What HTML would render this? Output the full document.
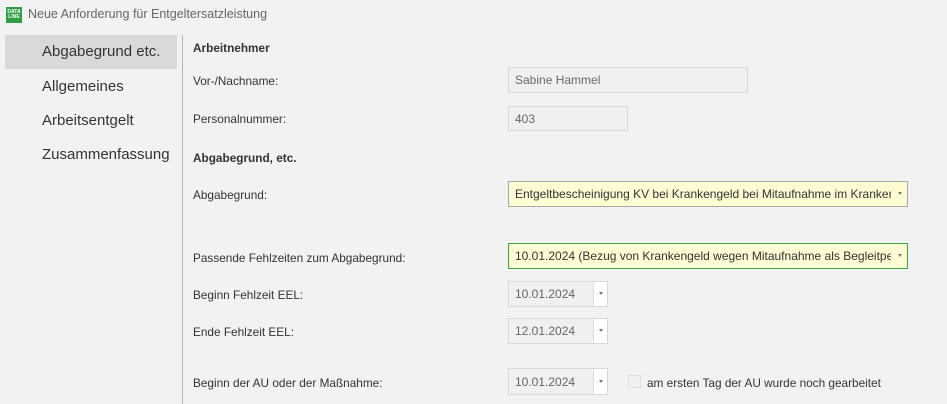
<!DOCTYPE html>
<html><head><meta charset="utf-8"><style>
*{box-sizing:border-box;margin:0;padding:0}
body{width:947px;height:404px;background:#f2f2f2;font-family:"Liberation Sans",sans-serif;color:#333;position:relative;overflow:hidden}
.a{position:absolute;white-space:nowrap}
.lbl{font-size:11.8px;color:#333}
.side{font-size:15px;color:#333;left:42px}
.box{position:absolute;border:1px solid #d8d8d8;background:#f0f0f0;font-size:12px;color:#666;padding-left:6px;display:flex;align-items:center;overflow:hidden;white-space:nowrap}
.dd{position:absolute;background:#fffbd3;border:1px solid #a9a9a9;font-size:12px;color:#333;padding-left:6px;display:flex;align-items:center;white-space:nowrap}
.dd .t{display:block;overflow:hidden;width:376px}
.arr{position:absolute;right:4px;top:50%;margin-top:-2px;width:0;height:0;border-left:2.5px solid transparent;border-right:2.5px solid transparent;border-top:3px solid #777}
.dd .arr{right:5px}
.btn{position:absolute;right:0;top:0;bottom:0;width:14px;background:#fff;border-left:1px solid #ddd}
.btn .arr{right:4px}
</style></head><body>
<div class="a" style="left:6px;top:7px;width:16px;height:16px;background:#2e9e44;color:#fff;font-size:5px;line-height:5px;font-weight:bold;text-align:center;padding-top:3px">DATA<br>LINE</div>
<div class="a" style="left:28px;top:7px;font-size:12.5px;color:#666">Neue Anforderung für Entgeltersatzleistung</div>
<div class="a" style="left:5px;top:35px;width:172px;height:34px;background:#d9d9d9"></div>
<div class="a side" style="top:43px">Abgabegrund etc.</div>
<div class="a side" style="top:78px">Allgemeines</div>
<div class="a side" style="top:112px">Arbeitsentgelt</div>
<div class="a side" style="top:146px">Zusammenfassung</div>
<div class="a" style="left:182px;top:35px;width:1px;height:369px;background:#b4b4b4"></div>
<div class="a lbl" style="left:193px;top:41px;font-weight:bold">Arbeitnehmer</div>
<div class="a lbl" style="left:193px;top:74px">Vor-/Nachname:</div>
<div class="box" style="left:508px;top:67px;width:240px;height:26px">Sabine Hammel</div>
<div class="a lbl" style="left:193px;top:112px">Personalnummer:</div>
<div class="box" style="left:508px;top:106px;width:120px;height:25px">403</div>
<div class="a lbl" style="left:193px;top:151px;font-weight:bold">Abgabegrund, etc.</div>
<div class="a lbl" style="left:193px;top:188px">Abgabegrund:</div>
<div class="dd" style="left:508px;top:181px;width:400px;height:26px"><span class="t">Entgeltbescheinigung KV bei Krankengeld bei Mitaufnahme im Krankenhaus</span><span class="arr"></span></div>
<div class="a lbl" style="left:193px;top:251px">Passende Fehlzeiten zum Abgabegrund:</div>
<div class="dd" style="left:508px;top:243px;width:400px;height:26px;border-color:#3aa83a"><span class="t">10.01.2024 (Bezug von Krankengeld wegen Mitaufnahme als Begleitperson)</span><span class="arr"></span></div>
<div class="a lbl" style="left:193px;top:288px">Beginn Fehlzeit EEL:</div>
<div class="box" style="left:508px;top:281px;width:100px;height:26px">10.01.2024<span class="btn"><span class="arr"></span></span></div>
<div class="a lbl" style="left:193px;top:325px">Ende Fehlzeit EEL:</div>
<div class="box" style="left:508px;top:318px;width:100px;height:26px">12.01.2024<span class="btn"><span class="arr"></span></span></div>
<div class="a lbl" style="left:193px;top:376px">Beginn der AU oder der Maßnahme:</div>
<div class="box" style="left:508px;top:368px;width:100px;height:27px">10.01.2024<span class="btn"><span class="arr"></span></span></div>
<div class="a" style="left:628px;top:375px;width:13px;height:13px;border:1px solid #ddd;background:#f0f0f0"></div>
<div class="a lbl" style="left:647px;top:376px">am ersten Tag der AU wurde noch gearbeitet</div>
</body></html>
